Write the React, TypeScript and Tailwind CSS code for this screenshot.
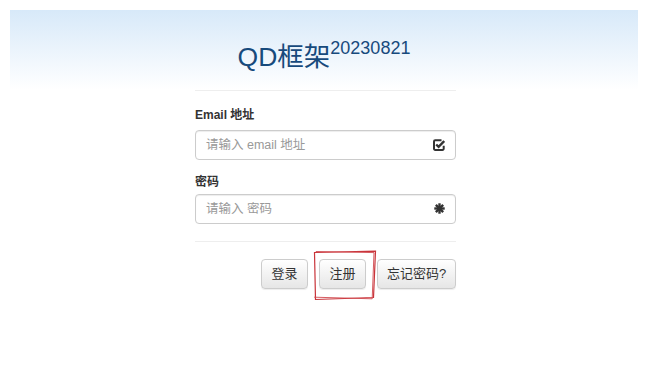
import React from "react";

const font = { fontFamily: '"Liberation Sans", "Noto Sans CJK SC", sans-serif' };

function CheckIcon() {
  return (
    <svg width="12" height="12" viewBox="0 0 12 12" className="absolute right-[10px] top-[8px]">
      <path d="M8.5 1.2H2.2a1.2 1.2 0 0 0-1.2 1.2v7.3a1.2 1.2 0 0 0 1.2 1.2h7.3a1.2 1.2 0 0 0 1.2-1.2V6.8" fill="none" stroke="#333" strokeWidth="2" />
      <path d="M3.2 5.5l2.4 2.4 5.6-5.8" fill="none" stroke="#333" strokeWidth="2.4" />
    </svg>
  );
}

function AsteriskIcon() {
  return (
    <svg width="11" height="11" viewBox="0 0 12 12" className="absolute right-[10px] top-[8px]">
      <g stroke="#333" strokeWidth="2.6" strokeLinecap="butt">
        <line x1="6" y1="0.3" x2="6" y2="11.7" />
        <line x1="0.3" y1="6" x2="11.7" y2="6" />
        <line x1="2" y1="2" x2="10" y2="10" />
        <line x1="2" y1="10" x2="10" y2="2" />
      </g>
    </svg>
  );
}

function Btn({ children, w }: { children: React.ReactNode; w: string }) {
  return (
    <button
      className={`h-[30px] ${w} rounded-[4px] border border-[#ccc] bg-gradient-to-b from-white to-[#e6e6e6] text-[13px] text-[#333] shadow-[inset_0_1px_0_rgba(255,255,255,0.15),0_1px_1px_rgba(0,0,0,0.075)]`}
    >
      {children}
    </button>
  );
}

export default function App() {
  return (
    <div className="w-[648px] h-[373px] bg-white px-[10px] pt-[10px]" style={font}>
      <div className="h-[80px] bg-gradient-to-b from-[#d7e9f9] to-white pt-[30px] text-center">
        <h1 className="text-[26.5px] leading-[34px] text-[#174a7c] font-normal">
          QD框架<sup className="text-[18px] relative top-[-2px] align-super leading-none">20230821</sup>
        </h1>
      </div>
      <div className="ml-[185px] w-[261px]">
        <div className="border-t border-[#eee]" />
        <div className="pt-[16px] text-[12px] font-bold text-[#333] leading-[17px]">Email 地址</div>
        <div className="relative mt-[6px] h-[30px] rounded-[4px] border border-[#ccc] shadow-[inset_0_1px_1px_rgba(0,0,0,0.075)] flex items-center pl-[10px] text-[12.5px] text-[#999]">
          请输入 email 地址
          <CheckIcon />
        </div>
        <div className="pt-[14px] text-[12px] font-bold text-[#333] leading-[17px]">密码</div>
        <div className="relative mt-[3px] h-[30px] rounded-[4px] border border-[#ccc] shadow-[inset_0_1px_1px_rgba(0,0,0,0.075)] flex items-center pl-[10px] text-[12.5px] text-[#999]">
          请输入 密码
          <AsteriskIcon />
        </div>
        <div className="mt-[17px] border-t border-[#eee]" />
        <div className="mt-[17px] flex justify-end gap-[11px]">
          <Btn w="w-[47px]">登录</Btn>
          <div className="relative">
            <Btn w="w-[47px]">注册</Btn>
            <svg className="absolute left-[-6px] top-[-9px] pointer-events-none" width="66" height="52" viewBox="0 0 66 52">
              <path d="M1.5 2.5 L62.5 1.2 L60.5 47.5 L2.5 49.5 Z" fill="none" stroke="#c9343a" strokeWidth="1.2" />
              <path d="M2.8 1.5 L61 2.6 L59.2 48.8 L1.2 47.2" fill="none" stroke="#d04a4f" strokeWidth="0.9" />
            </svg>
          </div>
          <Btn w="w-[79px]">忘记密码?</Btn>
        </div>
      </div>
    </div>
  );
}
